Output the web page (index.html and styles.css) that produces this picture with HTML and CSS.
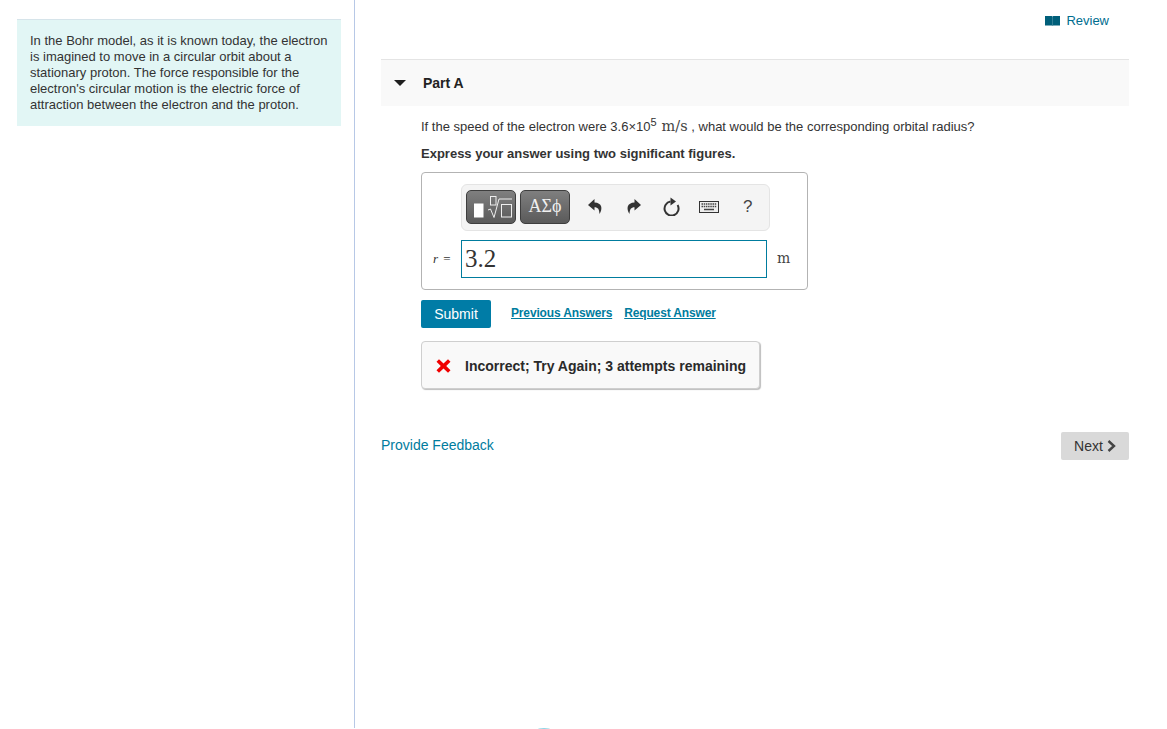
FILE: index.html
```html
<!DOCTYPE html>
<html lang="en">
<head>
<meta charset="utf-8">
<title>Part A</title>
<link rel="stylesheet" href="styles.css">
</head>
<body>
<div class="page">
  <aside class="side">
    <div class="intro">In the Bohr model, as it is known today, the electron is imagined to move in a circular orbit about a stationary proton. The force responsible for the electron's circular motion is the electric force of attraction between the electron and the proton.</div>
  </aside>
  <main class="main">
    <div class="review-row">
      <a class="review">
        <svg class="book" width="15" height="10" viewBox="0 0 15 10"><path d="M0 0h6.600c.5 0 .8.300.8.600V10c0-.3-.4-.6-.8-.6H0zM15 0H8.400c-.5 0-.8.300-.8.600V10c0-.3.400-.6.800-.6H15z" fill="#005f7a"/></svg>
        Review
      </a>
    </div>
    <section class="part">
      <header class="part-head">
        <svg class="caret" width="12" height="6" viewBox="0 0 12 6"><path d="M0 0h12L6 6z" fill="#1f1f1f"/></svg>
        <span class="part-title">Part A</span>
      </header>
      <div class="part-body">
        <p class="question">If the speed of the electron were 3.6×10<sup class="sup">5</sup><span class="math unit-inline">m/s</span> , what would be the corresponding orbital radius?</p>
        <p class="instr">Express your answer using two significant figures.</p>
        <div class="answer-box">
          <div class="toolbar">
            <span class="tool-btn tool-templates">
              <svg width="48" height="32" viewBox="0 0 48 32"><rect x="7" y="12.500" width="9.500" height="14" fill="#fff"/><rect x="23.500" y="5.500" width="5.500" height="8.500" fill="none" stroke="#eee"/><path d="M21 19l2.500-1 3.500 8.500L32 8h13" fill="none" stroke="#eee"/><rect x="34.500" y="13.500" width="10" height="12.500" fill="none" stroke="#eee"/></svg>
            </span>
            <span class="tool-btn tool-greek">ΑΣϕ</span>
            <span class="tool-icons">
              <svg class="tool-icon icon-undo" width="15" height="15" viewBox="0 0 15 15"><path d="M6.500 0L0 6l6.500 5.500V8.200c3.500 0 4.800 2 5 6.800C15 9.500 14 3.800 6.500 3.500z" fill="#333"/></svg>
              <svg class="tool-icon icon-redo" width="15" height="15" viewBox="0 0 15 15"><path d="M8.500 0L15 6l-6.500 5.500V8.200c-3.500 0-4.800 2-5 6.800C0 9.500 1 3.800 8.500 3.500z" fill="#333"/></svg>
              <svg class="tool-icon icon-reload" width="17" height="19" viewBox="0 0 17 19"><path d="M14.600 8A7 7 0 1 1 7.500 4.600" fill="none" stroke="#333" stroke-width="2"/><path d="M7.500.5l5.500 4-5.500 4z" fill="#333"/></svg>
              <svg class="tool-icon icon-keys" width="20" height="12" viewBox="0 0 20 12"><rect x=".5" y=".5" width="19" height="11" fill="#eee" stroke="#333"/><path d="M2.500 3h15M2.500 5.500h15" stroke="#444" stroke-width="1.300" stroke-dasharray="1.500 .7"/><path d="M5 8.500h10" stroke="#444" stroke-width="1.500"/></svg>
              <span class="help">?</span>
            </span>
          </div>
          <div class="input-row">
            <span class="var"><i>r</i> =</span>
            <div class="field">3.2</div>
            <span class="math unit">m</span>
          </div>
        </div>
        <div class="actions">
          <button class="submit" type="button">Submit</button>
          <a class="link">Previous Answers</a>
          <a class="link">Request Answer</a>
        </div>
        <div class="feedback">
          <svg width="15" height="14" viewBox="0 0 15 14"><path d="M.5 2.800L3 .3l4.500 4.300L12 .3l2.500 2.500L10.200 7l4.300 4.200L12 13.700 7.500 9.400 3 13.700.5 11.200 4.800 7z" fill="#f00000"/></svg>
          <span>Incorrect; Try Again; 3 attempts remaining</span>
        </div>
      </div>
    </section>
    <footer class="foot">
      <a class="provide">Provide Feedback</a>
      <a class="next">Next
        <svg width="9" height="12" viewBox="0 0 9 12"><path d="M1.500 1l5.500 5-5.500 5" fill="none" stroke="#444" stroke-width="2.400"/></svg>
      </a>
    </footer>
  </main>
</div>
<div class="blob"></div>
</body>
</html>
```
FILE: styles.css
```css
html, body {
  margin: 0;
  padding: 0;
  height: 729px;
  overflow: hidden;
  background: #fff;
}
body {
  font-family: "Liberation Sans", Arial, sans-serif;
  color: #333;
  position: relative;
}
p { margin: 0; }
.page {
  display: flex;
  height: 728px;
}
.side {
  width: 354px;
  flex: none;
  box-sizing: border-box;
  padding: 19px 13px 0 17px;
  box-shadow: 1px 0 0 #b7c8e6;
}
.intro {
  background: #e2f6f5;
  border-top: 1px solid #d6e4ea;
  padding: 13px 10px 0 13px;
  font-size: 13px;
  line-height: 16px;
  height: 107px;
  box-sizing: border-box;
}
.main {
  width: 748px;
  margin-left: 27px;
  flex: none;
}
.review-row {
  display: flex;
  justify-content: flex-end;
  height: 59px;
  padding: 12px 20px 0 0;
  box-sizing: border-box;
}
.review {
  color: #006d8f;
  font-size: 13px;
  line-height: 17px;
  display: flex;
  align-items: center;
  gap: 6px;
  height: 17px;
}
.part {
  border-top: 1px solid #e4e4e4;
}
.part-head {
  background: #f9f9f9;
  height: 46px;
  display: flex;
  align-items: center;
  padding-left: 13px;
}
.caret { margin-right: 17px; flex: none; }
.part-title {
  font-size: 14px;
  font-weight: bold;
  color: #222;
}
.part-body { padding: 11px 0 0 40px; }
.question {
  font-size: 13px;
  line-height: 18px;
  height: 18px;
  color: #333;
  white-space: nowrap;
}
.sup {
  font-size: 11px;
  line-height: 0;
  vertical-align: 5px;
}
.math {
  font-family: "DejaVu Serif", "Liberation Serif", serif;
  color: #444;
}
.unit-inline {
  font-size: 14.500px;
  margin-left: 5px;
}
.instr {
  font-size: 13px;
  font-weight: bold;
  line-height: 18px;
  margin-top: 10px;
  color: #333;
}
.answer-box {
  width: 387px;
  height: 118px;
  box-sizing: border-box;
  margin-top: 9px;
  border: 1px solid #b3b3b3;
  border-radius: 4px;
  padding: 11px 0 0 11px;
}
.toolbar {
  width: 309px;
  height: 47px;
  margin-left: 28px;
  box-sizing: border-box;
  background: #f4f4f4;
  border: 1px solid #e4e4e4;
  border-radius: 6px;
  display: flex;
  align-items: center;
  padding: 0 0 2px 4px;
  gap: 4px;
}
.tool-btn {
  width: 50px;
  height: 34px;
  box-sizing: border-box;
  border: 1px solid #3e3e3e;
  border-radius: 5px;
  background: linear-gradient(#7f7f7f, #5a5a5a);
  color: #f0f0f0;
  display: flex;
  align-items: center;
  justify-content: center;
}
.tool-greek {
  font-family: "Liberation Serif", "Times New Roman", serif;
  font-size: 18px;
}
.tool-icons {
  display: flex;
  align-items: center;
  margin-left: 14px;
}
.tool-icon { flex: none; }
.icon-undo { margin-right: 23px; }
.icon-redo { margin-right: 22px; }
.icon-reload { margin-right: 19px; }
.icon-keys { margin-right: 24px; }
.help {
  font-size: 17px;
  color: #444;
}
.input-row {
  display: flex;
  align-items: center;
  margin-top: 9px;
  height: 38px;
}
.var {
  font-family: "Liberation Serif", "Times New Roman", serif;
  font-size: 13px;
  word-spacing: 2px;
  color: #333;
  width: 28px;
  white-space: nowrap;
}
.field {
  width: 306px;
  height: 38px;
  box-sizing: border-box;
  border: 1px solid #007c9e;
  font-family: "Liberation Serif", "Times New Roman", serif;
  font-size: 25px;
  line-height: 36px;
  padding-left: 3px;
  color: #333;
}
.unit {
  font-size: 14px;
  margin-left: 10px;
  padding-bottom: 2px;
}
.actions {
  display: flex;
  align-items: center;
  margin-top: 10px;
  height: 28px;
}
.submit {
  width: 70px;
  height: 28px;
  background: #007ca6;
  color: #fff;
  border: 0;
  border-radius: 2px;
  font: 14px "Liberation Sans", Arial, sans-serif;
  padding: 0;
  margin-right: 20px;
}
.link {
  color: #007c9e;
  font-size: 12px;
  letter-spacing: -0.150px;
  font-weight: bold;
  text-decoration: underline;
  margin-right: 12px;
  padding-bottom: 3px;
}
.feedback {
  width: 339px;
  height: 48px;
  box-sizing: border-box;
  margin-top: 13px;
  background: #f9f9f9;
  border: 1px solid #cfcfcf;
  border-radius: 4px;
  box-shadow: 1px 1px 1px #bdbdbd;
  display: flex;
  align-items: center;
  padding: 1px 0 0 14px;
  gap: 14px;
  font-size: 14px;
  font-weight: bold;
  color: #2a2a2a;
  white-space: nowrap;
}
.foot {
  display: flex;
  justify-content: space-between;
  align-items: center;
  margin-top: 43px;
  height: 28px;
}
.provide {
  color: #007c9e;
  font-size: 14px;
  position: relative;
  top: -1px;
}
.next {
  width: 68px;
  height: 28px;
  box-sizing: border-box;
  background: #d9d9d9;
  border-radius: 2px;
  color: #333;
  font-size: 14px;
  display: flex;
  align-items: center;
  justify-content: center;
  gap: 4px;
}
.blob {
  position: absolute;
  left: 537px;
  top: 728px;
  width: 14px;
  height: 4px;
  border-radius: 50%;
  background: #8fd6e6;
}
```
